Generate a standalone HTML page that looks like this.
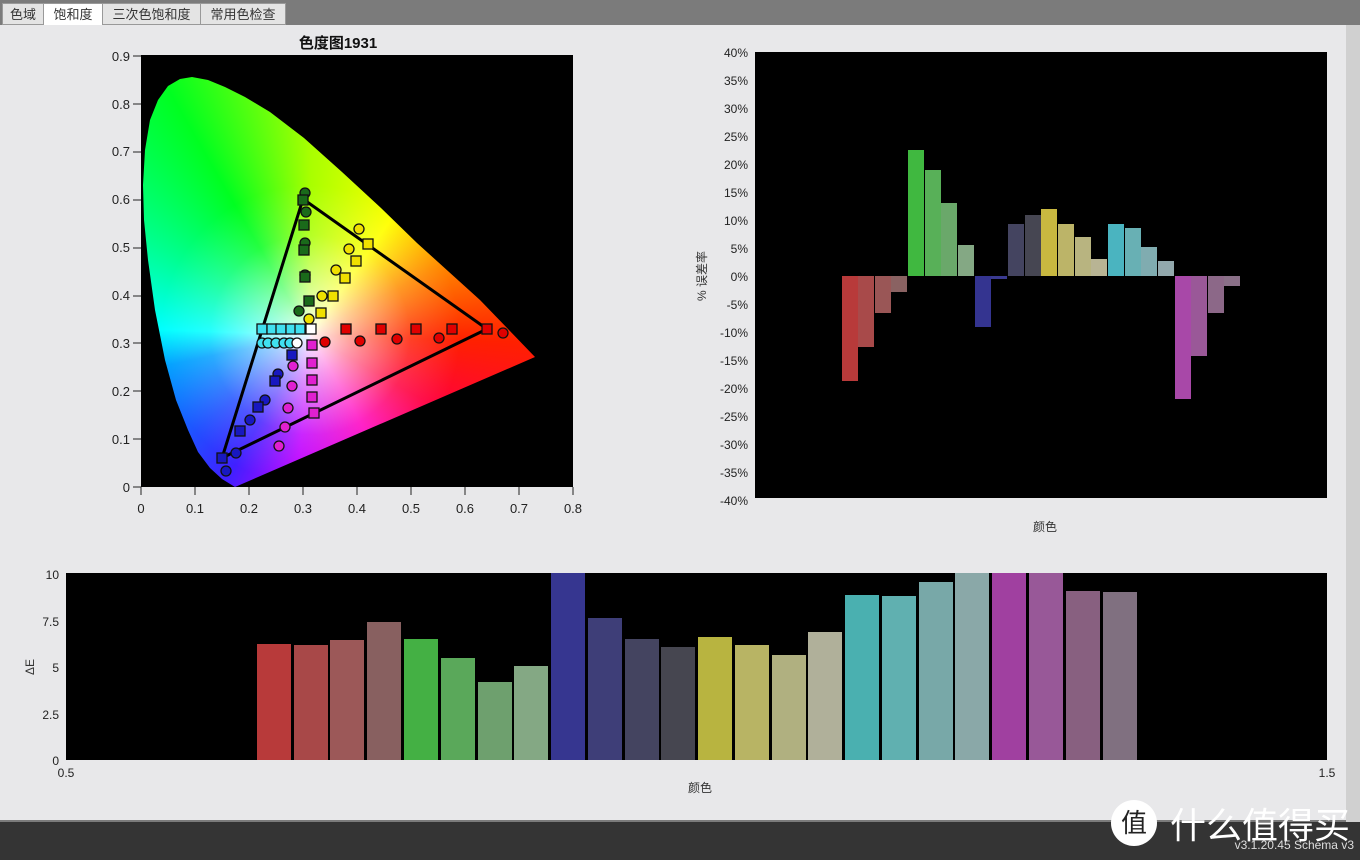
<!DOCTYPE html>
<html><head><meta charset="utf-8">
<style>
html,body{margin:0;padding:0;}
body{width:1360px;height:860px;position:relative;overflow:hidden;background:#7b7b7b;font-family:"Liberation Sans","Noto Sans CJK SC",sans-serif;}
.tab{position:absolute;top:3px;height:22px;background:#e4e4e4;border:1px solid #999;font-size:13px;line-height:22px;text-align:center;color:#333;box-sizing:border-box;}
#panel{position:absolute;left:0;top:25px;width:1346px;height:795px;background:#e8e8ea;}
#bottom{position:absolute;left:0;top:822px;width:1360px;height:38px;background:#343434;}
#cie{position:absolute;left:0;top:0;width:1360px;height:860px;
clip-path:polygon(235px 487px,222px 479px,210px 468px,198px 452px,188px 430px,176px 400px,165px 360px,155px 310px,148px 260px,144px 220px,143px 185px,145px 150px,150px 120px,158px 100px,168px 86px,180px 79px,192px 77px,208px 80px,225px 87px,245px 97px,270px 112px,304px 138px,342px 172px,381px 208px,417px 243px,480px 300px,535px 357px);
background:radial-gradient(circle at 310px 335px,rgba(255,255,255,0.95) 0,rgba(255,255,255,0.6) 40px,rgba(255,255,255,0.15) 100px,rgba(255,255,255,0) 150px),
conic-gradient(from 0deg at 310px 335px,#a8ff00 0deg,#ffff00 35deg,#ff8a00 62deg,#ff2000 92deg,#ff0040 120deg,#ff00c0 150deg,#c000ff 185deg,#4020ff 210deg,#2050ff 230deg,#00a0ff 258deg,#00ffff 272deg,#00ff90 300deg,#00ff20 330deg,#a8ff00 360deg);}
</style></head><body>
<div class="tab" style="left:2px;width:42px;">色域</div>
<div class="tab" style="left:43px;width:60px;background:#fff;border-bottom:none;height:24px;">饱和度</div>
<div class="tab" style="left:102px;width:99px;">三次色饱和度</div>
<div class="tab" style="left:200px;width:86px;">常用色检查</div>
<div id="panel"></div>
<div id="bottom"></div>
<svg style="position:absolute;left:0;top:0" width="1360" height="860">
<rect x="141" y="55" width="432" height="432" fill="#000"/>
<rect x="755" y="52" width="572" height="446" fill="#000"/>
<rect x="66" y="573" width="1261" height="187" fill="#000"/>
<rect x="1346" y="25" width="14" height="797" fill="#d0d0d0"/>
</svg>
<div id="cie"></div>
<svg style="position:absolute;left:0;top:0" width="1360" height="860" font-family="Liberation Sans, Noto Sans CJK SC, sans-serif">
<text x="338" y="48" font-size="15" font-weight="bold" text-anchor="middle" fill="#111">色度图1931</text>
<g font-size="13" fill="#222" text-anchor="end">
<text x="130" y="61">0.9</text><text x="130" y="109">0.8</text><text x="130" y="156">0.7</text><text x="130" y="204">0.6</text><text x="130" y="252">0.5</text><text x="130" y="300">0.4</text><text x="130" y="348">0.3</text><text x="130" y="396">0.2</text><text x="130" y="444">0.1</text><text x="130" y="492">0</text>
</g>
<g stroke="#222" stroke-width="1"><path d="M133 56H141M133 104H141M133 152H141M133 200H141M133 248H141M133 296H141M133 343H141M133 391H141M133 439H141M133 487H141M141 487V495M195 487V495M249 487V495M303 487V495M357 487V495M411 487V495M465 487V495M519 487V495M573 487V495"/></g>
<g font-size="13" fill="#222" text-anchor="middle">
<text x="141" y="513">0</text><text x="195" y="513">0.1</text><text x="249" y="513">0.2</text><text x="303" y="513">0.3</text><text x="357" y="513">0.4</text><text x="411" y="513">0.5</text><text x="465" y="513">0.6</text><text x="519" y="513">0.7</text><text x="573" y="513">0.8</text>
</g>
<polygon points="303,199 487,329 222,458" fill="none" stroke="#000" stroke-width="3"/>
<g stroke="#111" stroke-width="1.3">
<g fill="#1a6a1a"><circle cx="305" cy="193" r="5"/><circle cx="306" cy="212" r="5"/><circle cx="305" cy="243" r="5"/><circle cx="305" cy="275" r="5"/><circle cx="299" cy="311" r="5"/>
<rect x="298" y="195" width="10" height="10"/><rect x="299" y="220" width="10" height="10"/><rect x="299" y="245" width="10" height="10"/><rect x="300" y="272" width="10" height="10"/><rect x="304" y="296" width="10" height="10"/></g>
<g fill="#f0e000"><circle cx="359" cy="229" r="5"/><circle cx="349" cy="249" r="5"/><circle cx="336" cy="270" r="5"/><circle cx="322" cy="296" r="5"/><circle cx="309" cy="319" r="5"/>
<rect x="363" y="239" width="10" height="10"/><rect x="351" y="256" width="10" height="10"/><rect x="340" y="273" width="10" height="10"/><rect x="328" y="291" width="10" height="10"/><rect x="316" y="308" width="10" height="10"/></g>
<g fill="#e00000"><circle cx="325" cy="342" r="5"/><circle cx="360" cy="341" r="5"/><circle cx="397" cy="339" r="5"/><circle cx="439" cy="338" r="5"/><circle cx="503" cy="333" r="5"/>
<rect x="341" y="324" width="10" height="10"/><rect x="376" y="324" width="10" height="10"/><rect x="411" y="324" width="10" height="10"/><rect x="447" y="324" width="10" height="10"/><rect x="482" y="324" width="10" height="10"/></g>
<g fill="#e020d0"><circle cx="293" cy="366" r="5"/><circle cx="292" cy="386" r="5"/><circle cx="288" cy="408" r="5"/><circle cx="285" cy="427" r="5"/><circle cx="279" cy="446" r="5"/>
<rect x="307" y="340" width="10" height="10"/><rect x="307" y="358" width="10" height="10"/><rect x="307" y="375" width="10" height="10"/><rect x="307" y="392" width="10" height="10"/><rect x="309" y="408" width="10" height="10"/></g>
<g fill="#1818c0"><circle cx="278" cy="374" r="5"/><circle cx="265" cy="400" r="5"/><circle cx="250" cy="420" r="5"/><circle cx="236" cy="453" r="5"/><circle cx="226" cy="471" r="5"/>
<rect x="287" y="350" width="10" height="10"/><rect x="270" y="376" width="10" height="10"/><rect x="253" y="402" width="10" height="10"/><rect x="235" y="426" width="10" height="10"/><rect x="217" y="453" width="10" height="10"/></g>
<g fill="#40e0f0"><rect x="257" y="324" width="10" height="10"/><rect x="267" y="324" width="10" height="10"/><rect x="276" y="324" width="10" height="10"/><rect x="286" y="324" width="10" height="10"/><rect x="295" y="324" width="10" height="10"/>
<circle cx="262" cy="343" r="5"/><circle cx="268" cy="343" r="5"/><circle cx="276" cy="343" r="5"/><circle cx="284" cy="343" r="5"/><circle cx="290" cy="343" r="5"/></g>
<rect x="306" y="324" width="10" height="10" fill="#fff"/><circle cx="297" cy="343" r="5" fill="#fff"/>
</g>
<g font-size="12" fill="#222" text-anchor="end">
<text x="748" y="57">40%</text><text x="748" y="85">35%</text><text x="748" y="113">30%</text><text x="748" y="141">25%</text><text x="748" y="169">20%</text><text x="748" y="197">15%</text><text x="748" y="225">10%</text><text x="748" y="253">5%</text><text x="748" y="281">0%</text><text x="748" y="309">-5%</text><text x="748" y="337">-10%</text><text x="748" y="365">-15%</text><text x="748" y="393">-20%</text><text x="748" y="421">-25%</text><text x="748" y="449">-30%</text><text x="748" y="477">-35%</text><text x="748" y="505">-40%</text>
</g>
<text transform="translate(706,276) rotate(-90)" font-size="12" fill="#333" text-anchor="middle">% 误差率</text>
<text x="1045" y="531" font-size="12" fill="#333" text-anchor="middle">颜色</text>
<g>
<rect x="842" y="276" width="16" height="105" fill="#b83a3a"/><rect x="858" y="276" width="16" height="71" fill="#a84a4a"/><rect x="875" y="276" width="16" height="37" fill="#9a5656"/><rect x="891" y="276" width="16" height="16" fill="#8a6262"/>
<rect x="908" y="150" width="16" height="126" fill="#40b840"/><rect x="925" y="170" width="16" height="106" fill="#58b058"/><rect x="941" y="203" width="16" height="73" fill="#6aa86a"/><rect x="958" y="245" width="16" height="31" fill="#84a884"/>
<rect x="975" y="276" width="16" height="51" fill="#343490"/><rect x="991" y="276" width="16" height="3" fill="#3a3a90"/>
<rect x="1008" y="224" width="16" height="52" fill="#444460"/><rect x="1025" y="215" width="16" height="61" fill="#464652"/><rect x="1041" y="209" width="16" height="67" fill="#c8b840"/><rect x="1058" y="224" width="16" height="52" fill="#bcb468"/><rect x="1075" y="237" width="16" height="39" fill="#b8b480"/><rect x="1091" y="259" width="16" height="17" fill="#b8b494"/>
<rect x="1108" y="224" width="16" height="52" fill="#4ab4c0"/><rect x="1125" y="228" width="16" height="48" fill="#68b0b4"/><rect x="1141" y="247" width="16" height="29" fill="#80acb0"/><rect x="1158" y="261" width="16" height="15" fill="#92a8ac"/>
<rect x="1175" y="276" width="16" height="123" fill="#a848a8"/><rect x="1191" y="276" width="16" height="80" fill="#9a5898"/><rect x="1208" y="276" width="16" height="37" fill="#8c6888"/><rect x="1224" y="276" width="16" height="10" fill="#8a7088"/>
</g>
<g font-size="12" fill="#222" text-anchor="end">
<text x="59" y="579">10</text><text x="59" y="626">7.5</text><text x="59" y="672">5</text><text x="59" y="719">2.5</text><text x="59" y="765">0</text>
</g>
<text x="66" y="777" font-size="12" fill="#222" text-anchor="middle">0.5</text>
<text x="1327" y="777" font-size="12" fill="#222" text-anchor="middle">1.5</text>
<text transform="translate(34,667) rotate(-90)" font-size="12" fill="#333" text-anchor="middle">ΔE</text>
<text x="700" y="792" font-size="12" fill="#333" text-anchor="middle">颜色</text>
<g>
<rect x="257" y="644" width="34" height="116" fill="#b83a3a"/><rect x="294" y="645" width="34" height="115" fill="#a84848"/><rect x="330" y="640" width="34" height="120" fill="#9c5858"/><rect x="367" y="622" width="34" height="138" fill="#886060"/>
<rect x="404" y="639" width="34" height="121" fill="#44b044"/><rect x="441" y="658" width="34" height="102" fill="#5aa85a"/><rect x="478" y="682" width="34" height="78" fill="#6ea06e"/><rect x="514" y="666" width="34" height="94" fill="#84a884"/>
<rect x="551" y="573" width="34" height="187" fill="#363690"/><rect x="588" y="618" width="34" height="142" fill="#3e3e78"/><rect x="625" y="639" width="34" height="121" fill="#444460"/><rect x="661" y="647" width="34" height="113" fill="#464650"/>
<rect x="698" y="637" width="34" height="123" fill="#b8b440"/><rect x="735" y="645" width="34" height="115" fill="#b8b464"/><rect x="772" y="655" width="34" height="105" fill="#b0b080"/><rect x="808" y="632" width="34" height="128" fill="#b0b09a"/>
<rect x="845" y="595" width="34" height="165" fill="#4ab0b0"/><rect x="882" y="596" width="34" height="164" fill="#60b0b0"/><rect x="919" y="582" width="34" height="178" fill="#78a8a8"/><rect x="955" y="573" width="34" height="187" fill="#8aa8a8"/>
<rect x="992" y="573" width="34" height="187" fill="#a040a0"/><rect x="1029" y="573" width="34" height="187" fill="#985898"/><rect x="1066" y="591" width="34" height="169" fill="#886080"/><rect x="1103" y="592" width="34" height="168" fill="#807080"/>
</g>
<circle cx="1134" cy="823" r="23" fill="#fff"/>
<text x="1134" y="832" font-size="26" fill="#222" text-anchor="middle">值</text>
<text x="1170" y="838" font-size="36" fill="#fff">什么值得买</text>
<text x="1354" y="849" font-size="12" fill="#ddd" text-anchor="end">v3.1.20.45 Schema v3</text>
</svg>
</body></html>
